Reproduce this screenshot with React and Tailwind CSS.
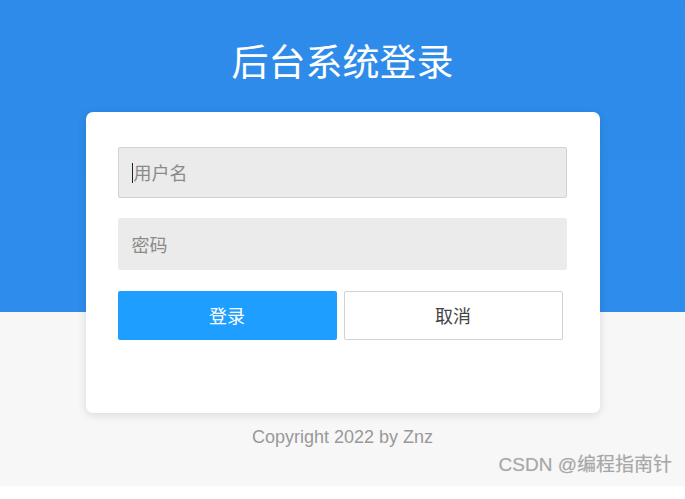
export default function App() {
  const cjk = { fontFamily: '"Microsoft YaHei", "Noto Sans CJK SC", "Noto Sans", sans-serif' };
  return (
    <div
      className="relative w-[685px] h-[499px] overflow-hidden flex flex-col items-center bg-[linear-gradient(to_bottom,#2f8bea_0px,#2e8cec_312px,#f7f7f7_312px,#f7f7f7_486px,#ffffff_486px)]"
      style={cjk}
    >
      <h1 className="mt-[36px] h-[48px] leading-[48px] text-[37px] text-white font-normal tracking-[0px]">
        后台系统登录
      </h1>
      <div className="mt-[28px] w-[514px] h-[301px] bg-white rounded-[7px] shadow-[0_2px_10px_rgba(0,0,0,0.12)] px-[32px] pt-[35px] flex flex-col">
        <div className="h-[51px] w-[449px] bg-[#ebebeb] border border-[#d2d2d2] rounded-[2px] flex items-center pl-[13px] text-[18px] text-[#8a8a8a]">
          <span className="w-[1px] h-[20px] bg-[#222] mr-[1px]" />
          用户名
        </div>
        <div className="mt-[20px] h-[52px] w-[449px] bg-[#ebebeb] rounded-[2px] flex items-center pl-[14px] text-[18px] text-[#8a8a8a]">
          密码
        </div>
        <div className="mt-[21px] flex gap-[7px]">
          <div className="w-[219px] h-[49px] bg-[#1e9fff] rounded-[2px] flex items-center justify-center text-white text-[18px]">
            登录
          </div>
          <div className="w-[219px] h-[49px] bg-white border border-[#d2d2d2] rounded-[2px] flex items-center justify-center text-[#444] text-[18px]">
            取消
          </div>
        </div>
      </div>
      <div
        className="mt-[11px] h-[26px] leading-[26px] text-[18px] text-[#999]"
        style={{ fontFamily: '"Liberation Sans", Arial, sans-serif' }}
      >
        Copyright 2022 by Znz
      </div>
      <div
        className="absolute right-[13px] top-[452px] text-[19px] leading-[26px] text-[#a8a8a8] [text-shadow:0_0_1px_rgba(0,0,0,0.15)]"
        style={{ fontFamily: '"Liberation Sans", Arial, "Noto Sans CJK SC", sans-serif' }}
      >
        CSDN @编程指南针
      </div>
    </div>
  );
}
